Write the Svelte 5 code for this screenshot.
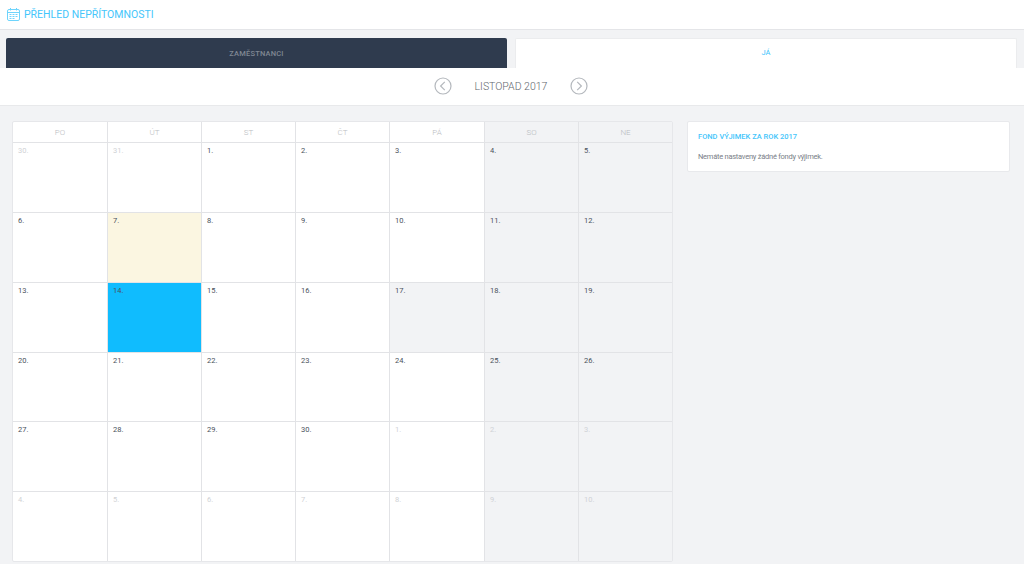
<script>
  const heads = ['PO', 'ÚT', 'ST', 'ČT', 'PÁ', 'SO', 'NE'];
  const seq = [
    [30, 1], [31, 1], [1], [2], [3], [4], [5],
    [6], [7], [8], [9], [10], [11], [12],
    [13], [14], [15], [16], [17], [18], [19],
    [20], [21], [22], [23], [24], [25], [26],
    [27], [28], [29], [30], [1, 1], [2, 1], [3, 1],
    [4, 1], [5, 1], [6, 1], [7, 1], [8, 1], [9, 1], [10, 1]
  ];
  const cells = seq.map(([n, muted], i) => {
    const col = i % 7;
    let kind = '';
    if (i === 8) kind = 'today';
    else if (i === 15) kind = 'selected';
    else if (col >= 5 || i === 18) kind = 'off';
    return { n, muted: !!muted, kind, last: col === 6 };
  });
</script>

<div class="page">
  <header class="top">
    <svg class="cal" width="13" height="13" viewBox="0 0 13 13" fill="none" stroke="#6ed4fc" stroke-width="1">
      <rect x="0.5" y="1.5" width="12" height="11" rx="1.5" />
      <path d="M0.5 4.5h12M3.5 0v2.5M9.5 0v2.5" />
      <path d="M2.5 6.5h2M5.5 6.5h2M8.5 6.5h2M2.5 8.5h2M5.5 8.5h2M8.5 8.5h2M2.5 10.5h2M5.5 10.5h2" />
    </svg>
    <h1>PŘEHLED NEPŘÍTOMNOSTI</h1>
  </header>

  <div class="tabs">
    <div class="tab dark">ZAMĚSTNANCI</div>
    <div class="tab light">JÁ</div>
  </div>

  <div class="month">
    <svg width="18" height="18" viewBox="0 0 18 18" fill="none" stroke="#b4b8bd" stroke-width="1.2">
      <circle cx="9" cy="9" r="8" />
      <path d="M10.8 4.8 6.6 9l4.2 4.2" />
    </svg>
    <span class="label">LISTOPAD 2017</span>
    <svg width="18" height="18" viewBox="0 0 18 18" fill="none" stroke="#b4b8bd" stroke-width="1.2">
      <circle cx="9" cy="9" r="8" />
      <path d="M7.2 4.8 11.4 9l-4.2 4.2" />
    </svg>
  </div>

  <main class="content">
    <section class="calendar">
      {#each heads as h, i}
        <div class="head" class:off={i >= 5} class:last={i === 6}>{h}</div>
      {/each}
      {#each cells as c}
        <div class="cell {c.kind}" class:muted={c.muted} class:last={c.last}>{c.n}.</div>
      {/each}
    </section>

    <aside class="fund">
      <h2>FOND VÝJIMEK ZA ROK 2017</h2>
      <p>Nemáte nastaveny žádné fondy výjimek.</p>
    </aside>
  </main>
</div>

<style>
  :global(body) {
    margin: 0;
    background: #f2f3f5;
    font-family: Roboto, "Open Sans", sans-serif;
  }
  .page {
    height: 564px;
    overflow: hidden;
  }
  .top {
    height: 29px;
    background: #fff;
    border-bottom: 1px solid #e4e5e8;
    display: flex;
    align-items: center;
    gap: 4px;
    padding-left: 7px;
  }
  .top h1 {
    margin: 0;
    font-size: 10.5px;
    font-weight: 400;
    color: #45c6fb;
    letter-spacing: 0;
  }
  .tabs {
    display: flex;
    gap: 8px;
    padding: 8px 7px 0 6px;
    height: 30px;
  }
  .tab {
    height: 30px;
    font-size: 7.5px;
    display: flex;
    align-items: center;
    justify-content: center;
    border-radius: 2px 2px 0 0;
  }
  .dark {
    width: 501px;
    background: #2f3b4e;
    color: #7f8793;
    font-weight: 500;
    letter-spacing: 0.2px;
  }
  .light {
    flex: 1;
    background: #fff;
    color: #38c2fb;
    border: 1px solid #ebecee;
    border-bottom: none;
    box-sizing: border-box;
    padding-bottom: 2px;
  }
  .month {
    background: #fff;
    border-bottom: 1px solid #e8e9eb;
    display: flex;
    align-items: center;
    padding: 0 0 1px 434px;
    box-sizing: border-box;
    height: 38px;
  }
  .label {
    width: 118px;
    text-align: center;
    font-size: 10.5px;
    font-weight: 300;
    color: #62676e;
  }
  .content {
    display: flex;
    align-items: flex-start;
    gap: 14px;
    padding: 15px 14px 0 12px;
  }
  .calendar {
    width: 661px;
    height: 441px;
    flex: none;
    display: grid;
    grid-template-columns: 95px 94px 94px 94px 95px 94px 93px;
    grid-template-rows: 21px 70px 70px 70px 69px 70px 69px;
    background: #fff;
    border: 1px solid #e6e7ea;
    border-radius: 2px;
    box-sizing: border-box;
  }
  .head,
  .cell {
    box-sizing: border-box;
    border-right: 1px solid #e2e3e6;
    border-bottom: 1px solid #e2e3e6;
  }
  .head {
    display: flex;
    align-items: center;
    justify-content: center;
    font-size: 8px;
    font-weight: 300;
    color: #b9bcc1;
  }
  .cell {
    font-size: 7.5px;
    color: #4a525c;
    padding: 2px 0 0 5px;
    line-height: 11px;
  }
  .cell.last,
  .head.last {
    border-right: none;
  }
  .cell:nth-last-child(-n+7) {
    border-bottom: none;
  }
  .off {
    background: #f2f3f5;
  }
  .today {
    background: #fbf6e1;
  }
  .selected {
    background: #10bcfe;
  }
  .muted {
    color: #d0d2d5;
  }
  .fund {
    width: 323px;
    height: 51px;
    flex: none;
    box-sizing: border-box;
    background: #fff;
    border: 1px solid #e8e9ec;
    border-radius: 2px;
    padding: 9px 10px;
  }
  .fund h2 {
    margin: 0;
    font-size: 7.5px;
    font-weight: 500;
    color: #45c6fb;
    line-height: 11px;
    letter-spacing: 0;
  }
  .fund p {
    margin: 9px 0 0;
    font-size: 7.5px;
    color: #7a8088;
    line-height: 11px;
    letter-spacing: -0.25px;
  }
</style>
